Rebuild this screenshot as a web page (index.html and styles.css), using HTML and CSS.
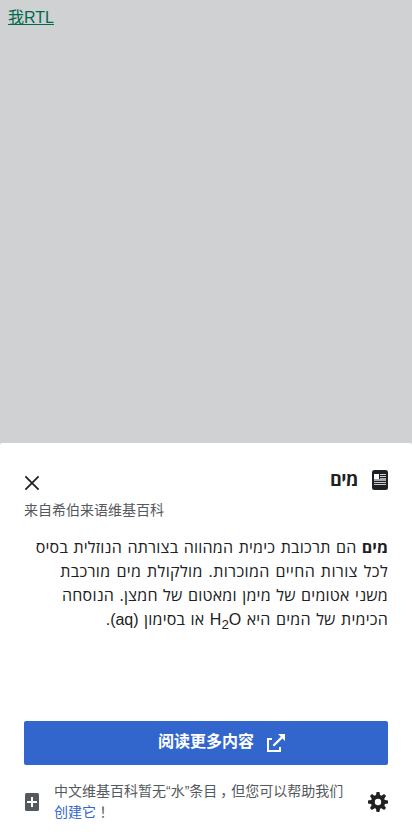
FILE: index.html
```html
<!DOCTYPE html>
<html lang="zh-Hans">
<head>
<meta charset="utf-8">
<meta name="viewport" content="width=device-width, initial-scale=1">
<title>RTL</title>
<link rel="stylesheet" href="styles.css">
</head>
<body>
<a class="trigger" href="#">我RTL</a>
<section class="preview" dir="rtl">
  <header class="header">
    <svg class="logo" viewBox="0 0 16 20"><rect width="16" height="20" rx="2.5" fill="#202122"/><path fill="#fff" d="M2 4h5v5H2z"/><path fill="#c8ccd1" d="M8 4h6v1H8zM8 6h6v1H8z"/><path fill="#a2a9b1" d="M8 8h6v1H8zM2 9h12v2H2z"/><path fill="#c8ccd1" d="M2 12h12v1H2zM2 14h12v1H2z"/></svg>
    <h1 class="title" lang="he">מים</h1>
    <svg class="close" viewBox="0 0 16 16"><path d="M1.4 1.4l13.2 13.2M14.6 1.4L1.4 14.6" fill="none" stroke="#202122" stroke-width="1.8"/></svg>
  </header>
  <div class="source" dir="ltr">来自希伯来语维基百科</div>
  <p class="extract" lang="he"><b>מים</b> הם תרכובת כימית המהווה בצורתה הנוזלית בסיס<br><span class="loose">לכל צורות החיים המוכרות. מולקולת מים מורכבת</span><br>משני אטומים של מימן ומאטום של חמצן. הנוסחה<br>הכימית של המים היא <span class="latin" dir="ltr">H<sub>2</sub>O</span> או בסימון <span class="latin">(aq).</span></p>
  <a class="more" href="#">
    <svg class="external" viewBox="0 0 18 18"><path fill="#fff" d="M0 4h5v2H2v10h10v-3h2v5H0zM11 0h7v7l-2.6-2.6-8.2 8.2-1.6-1.6 8.2-8.2z"/></svg>
    <span>阅读更多内容</span>
  </a>
  <footer class="footer">
    <svg class="gear" viewBox="0 0 20 20"><g fill="#202122"><path id="tooth" d="M8 3l.6-3h2.8l.6 3v14l-.6 3H8.6L8 17z"/><use href="#tooth" transform="rotate(45 10 10)"/><use href="#tooth" transform="rotate(90 10 10)"/><use href="#tooth" transform="rotate(135 10 10)"/><circle cx="10" cy="10" r="7.2"/></g><circle cx="10" cy="10" r="3.2" fill="#fff"/></svg>
    <div class="notice" dir="ltr">中文维基百科暂无“水”条目<span class="comma">，</span>但您可以帮助我们<a href="#">创建它</a><span lang="zh-Hant">！</span></div>
    <svg class="add" viewBox="0 0 14 18"><rect width="14" height="18" rx="1.5" fill="#54595d"/><path fill="#fff" d="M6 4h2v4h4v2H8v4H6v-4H2V8h4z"/></svg>
  </footer>
</section>
</body>
</html>
```
FILE: styles.css
```css
* { box-sizing: border-box; }
body {
  display: flex;
  flex-direction: column;
  justify-content: space-between;
  align-items: flex-start;
  height: 100vh;
  margin: 0;
  overflow: hidden;
  background: #d0d1d3;
  color: #202122;
  font: 16px/24px "Liberation Sans", "Noto Sans CJK TC", sans-serif;
}
.trigger {
  margin: 8px;
  color: #006a4e;
  line-height: 20px;
}
.preview {
  display: flex;
  flex-direction: column;
  width: 100%;
  height: 396px;
  padding: 24px 24px 16px;
  border-radius: 2px 2px 0 0;
  background: #fff;
}
.header {
  display: flex;
  align-items: center;
  height: 26px;
}
.logo { width: 16px; height: 20px; margin-top: -1px; }
.title {
  flex: 1;
  margin: -2px 0 0;
  padding-right: 14px;
  font-family: "Open Sans", sans-serif;
  font-size: 18px;
  letter-spacing: -.5px;
  line-height: 26px;
}
.close { width: 16px; height: 16px; margin-top: 6px; }
.source {
  margin-top: 7px;
  color: #54595d;
  font-size: 14px;
  line-height: 20px;
}
.extract {
  height: 186px;
  margin: 15px 0 0;
  font-family: "Open Sans", sans-serif;
  letter-spacing: .23px;
  word-spacing: 1px;
  white-space: nowrap;
}
.extract b { letter-spacing: 0; }
.loose { letter-spacing: .36px; word-spacing: 1.3px; }
.latin {
  font-family: "Liberation Sans", sans-serif;
  letter-spacing: 0;
}
.extract sub { line-height: 0; }
.more {
  display: flex;
  flex: none;
  align-items: center;
  justify-content: center;
  gap: 13px;
  height: 44px;
  padding-left: 29px;
  border-radius: 2px;
  background: #36c;
  color: #fff;
  font-weight: 700;
  text-decoration: none;
}
.more span { margin-top: -2px; margin-left: 2px; }
.external { width: 18px; height: 18px; }
.footer {
  display: flex;
  align-items: center;
  margin-top: 16px;
  height: 42px;
}
.gear { width: 20px; height: 20px; }
.notice {
  flex: 1;
  margin: 0 14px 0 15px;
  color: #54595d;
  font-size: 14px;
  line-height: 21px;
}
.comma { margin-left: 3px; margin-right: -3px; }
.notice a { color: #36c; text-decoration: none; }
.add { width: 14px; height: 18px; margin-left: 1px; }
```
